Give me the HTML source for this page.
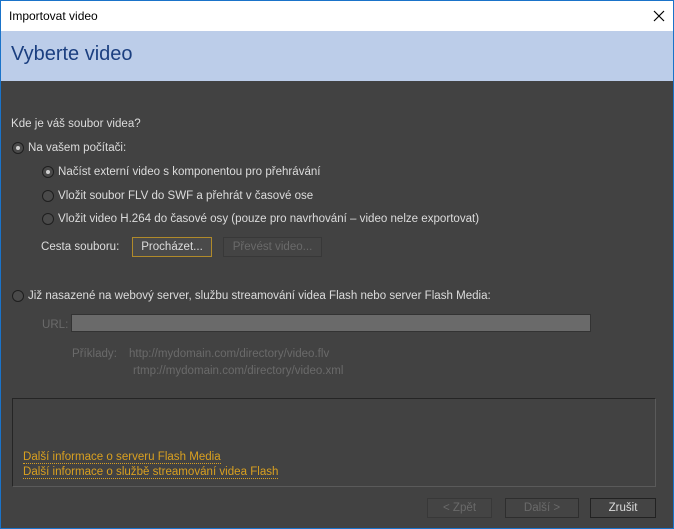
<!DOCTYPE html>
<html><head><meta charset="utf-8"><style>
*{margin:0;padding:0;box-sizing:border-box}
body{width:674px;height:529px;overflow:hidden;background:#1a73c9;font-family:"Liberation Sans","DejaVu Sans",sans-serif;font-size:11.55px;position:relative}
.a{position:absolute;white-space:nowrap}
span.a{margin-top:1px}
#tb{left:1px;top:0;width:672px;height:31px;background:#fff;border-top:1px solid #1a73c9}
#hd{left:1px;top:31px;width:672px;height:50px;background:#bccde9}
#bd{left:1px;top:81px;width:672px;height:447px;background:#424242}
.t{color:#dcdcdc}
.d{color:#6a6a6a}
.r{width:12px;height:12px;border-radius:50%;border:1px solid #1e1e1e;background:#4a4a4a}
.r.on::after{content:"";position:absolute;left:3px;top:3px;width:4px;height:4px;border-radius:50%;background:#cfcfcf}
.btn{height:20px;border:1px solid #2a2a2a;background:#444;text-align:center;line-height:18px}
.lk{color:#d9a020;border-bottom:1px dotted #d9a020;line-height:12px}
</style></head><body>
<div class="a" id="tb"><span class="a" style="left:8px;top:7px;color:#000;font-size:12px">Importovat video</span>
<svg class="a" style="left:652px;top:9px" width="12" height="12"><path d="M1 1L11 11M11 1L1 11" stroke="#000" stroke-width="1.2"/></svg></div>
<div class="a" id="hd"><span class="a" style="left:10px;top:11px;font-size:20px;color:#1b3f80">Vyberte video</span></div>
<div class="a" id="bd"></div>
<span class="a t" style="left:11px;top:117px">Kde je váš soubor videa?</span>
<div class="a r on" style="left:12px;top:142px"></div><span class="a t" style="left:28px;top:141px">Na vašem počítači:</span>
<div class="a r on" style="left:42px;top:166px"></div><span class="a t" style="left:58px;top:165px">Načíst externí video s komponentou pro přehrávání</span>
<div class="a r" style="left:42px;top:190px"></div><span class="a t" style="left:58px;top:189px">Vložit soubor FLV do SWF a přehrát v časové ose</span>
<div class="a r" style="left:42px;top:213px"></div><span class="a t" style="left:58px;top:212px">Vložit video H.264 do časové osy (pouze pro navrhování – video nelze exportovat)</span>
<span class="a t" style="left:41px;top:240px">Cesta souboru:</span>
<div class="a btn t" style="left:132px;top:237px;width:80px;border-color:#b08a2a;background:#4a4a4a">Procházet...</div>
<div class="a btn d" style="left:223px;top:237px;width:99px;border-color:#383838">Převést video...</div>
<div class="a r" style="left:12px;top:290px"></div><span class="a t" style="left:28px;top:289px">Již nasazené na webový server, službu streamování videa Flash nebo server Flash Media:</span>
<span class="a d" style="left:42px;top:318px">URL:</span>
<div class="a" style="left:71px;top:314px;width:520px;height:18px;background:#6a6a6a;border:1px solid #333"></div>
<span class="a d" style="left:72px;top:347px">Příklady:</span>
<span class="a d" style="left:129px;top:347px">http://mydomain.com/directory/video.flv</span>
<span class="a d" style="left:133px;top:364px">rtmp://mydomain.com/directory/video.xml</span>
<div class="a" style="left:12px;top:398px;width:644px;height:89px;border:1px solid #252525;border-right-color:#5a5a5a;border-bottom-color:#5a5a5a"></div>
<span class="a lk" style="left:23px;top:450px">Další informace o serveru Flash Media</span>
<span class="a lk" style="left:23px;top:465px">Další informace o službě streamování videa Flash</span>
<div class="a btn d" style="left:427px;top:498px;width:65px;border-color:#383838">&lt; Zpět</div>
<div class="a btn d" style="left:505px;top:498px;width:74px;border-color:#2e2e2e">Další &gt;</div>
<div class="a btn t" style="left:590px;top:498px;width:66px;border-color:#222">Zrušit</div>
</body></html>
